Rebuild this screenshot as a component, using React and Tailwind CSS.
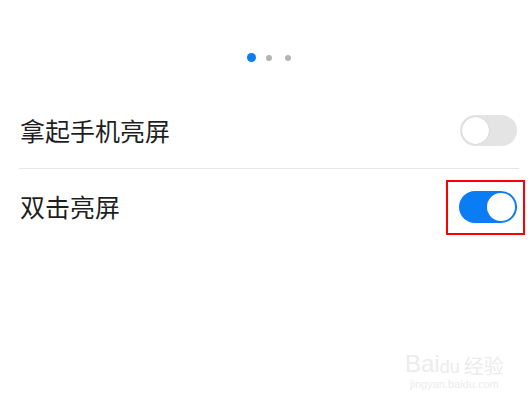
export default function App() {
  return (
    <div
      className="relative h-[400px] w-[531px] overflow-hidden bg-white"
      style={{ fontFamily: '"Noto Sans CJK SC", "Noto Sans", sans-serif' }}
    >
      <div className="flex h-[93px] items-start pl-[247px] pt-[53px]">
        <span className="h-[9px] w-[9px] rounded-full bg-[#0a7cf4]" />
        <span className="ml-[10px] mt-[1.5px] h-[6px] w-[6px] rounded-full bg-[#b4b4b4]" />
        <span className="ml-[13px] mt-[1.5px] h-[6px] w-[6px] rounded-full bg-[#b4b4b4]" />
      </div>

      <div className="flex h-[75px] items-center justify-between pl-[20px] pr-[14px]">
        <span className="text-[25px] leading-none text-[#1f1f1f]">拿起手机亮屏</span>
        <div className="flex h-[31px] w-[57px] items-center rounded-full bg-[#e4e4e4] p-[2px]">
          <div className="h-[27px] w-[27px] rounded-full bg-white shadow-[0_0_1px_rgba(0,0,0,0.25)]" />
        </div>
      </div>

      <div className="ml-[19px] mr-[12px] h-px bg-[#e6e6e6]" />

      <div className="flex h-[75px] items-center justify-between pl-[20px] pr-[14px]">
        <span className="text-[25px] leading-none text-[#1f1f1f]">双击亮屏</span>
        <div className="flex h-[32px] w-[58px] items-center justify-end rounded-full bg-[#0a7cf4] p-[2px]">
          <div className="h-[28px] w-[28px] rounded-full bg-white" />
        </div>
      </div>

      <div className="absolute left-[446px] top-[180px] h-[55px] w-[79px] border-2 border-[#f00]" />

      <div className="absolute left-[405px] top-[352px] flex flex-col items-center gap-[3px] text-[#ececec]">
        <div className="flex items-end leading-none">
          <span className="text-[24px]" style={{ fontFamily: '"Liberation Sans", sans-serif' }}>Bai</span>
          <span className="text-[18px]" style={{ fontFamily: '"Liberation Sans", sans-serif' }}>du</span>
          <span className="ml-1 text-[20px]">经验</span>
        </div>
        <span className="text-[11px] leading-none" style={{ fontFamily: '"Liberation Sans", sans-serif' }}>
          jingyan.baidu.com
        </span>
      </div>
    </div>
  )
}
